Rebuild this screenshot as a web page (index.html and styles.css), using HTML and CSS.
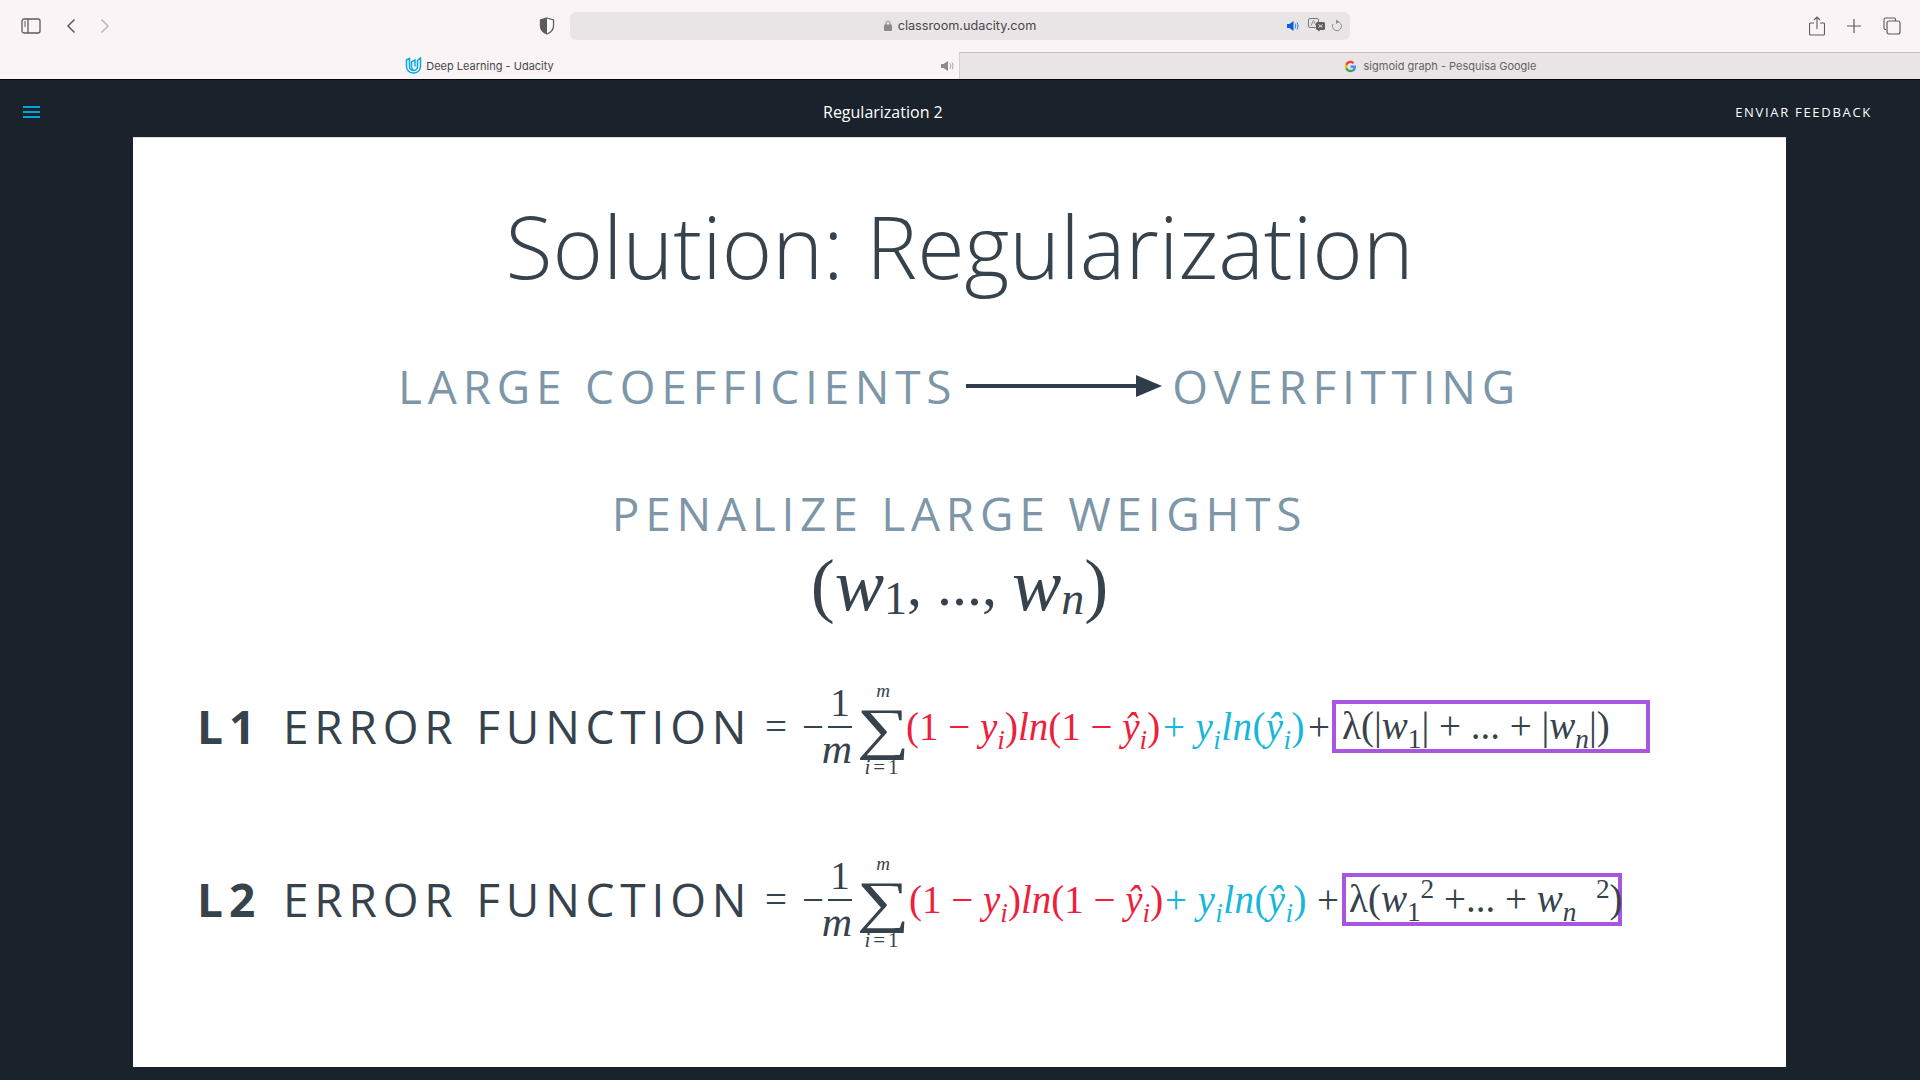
FILE: index.html
```html
<!DOCTYPE html>
<html>
<head>
    <title>Deep Learning - Udacity</title>
    <link rel="stylesheet" href="styles.css">
</head>
<body>
    <div class="toolbar">
        <div class="tool-left">
            <svg class="ico-sidebar" width="20" height="16" viewBox="0 0 20 16"><rect x="1" y="1" width="18" height="14" rx="2" fill="none" stroke="#5f5b5d" stroke-width="1.3"/><path d="M7 1v14" stroke="#5f5b5d" stroke-width="1.3"/><path d="M3 4h2M3 6h2M3 8h2" stroke="#5f5b5d" stroke-width="1"/></svg>
            <svg class="ico-back" width="10" height="16" viewBox="0 0 10 16"><path d="M8.5 1.5L2 8l6.500 6.500" fill="none" stroke="#5f5b5d" stroke-width="1.5"/></svg>
            <svg class="ico-fwd" width="10" height="16" viewBox="0 0 10 16"><path d="M1.500 1.500L8 8l-6.500 6.500" fill="none" stroke="#bdb9bb" stroke-width="1.5"/></svg>
        </div>
        <svg class="ico-shield" width="16" height="18" viewBox="0 0 16 18"><path d="M8 1l6.500 2v6c0 4-3 6.500-6.500 8-3.500-1.500-6.500-4-6.500-8V3z" fill="#fff" stroke="#5f5b5d" stroke-width="1.300"/><path d="M8 1L1.500 3v6c0 4 3 6.500 6.500 8z" fill="#5f5b5d"/></svg>
        <div class="address">
            <div class="address-text">
                <svg width="8" height="11" viewBox="0 0 8 11"><path d="M2 5V3a2 2 0 0 1 4 0v2" fill="none" stroke="#8d898b" stroke-width="1"/><rect y="4.500" width="8" height="6.500" rx="1" fill="#8d898b"/></svg>
                <span>classroom.udacity.com</span>
            </div>
            <div class="address-icons">
                <svg class="ico-speaker" width="12" height="12" viewBox="0 0 12 12"><path d="M0 4h2.500L6.500 1v10L2.500 8H0z" fill="#0a5fd8"/><path d="M8 3.500c1 1.500 1 3.500 0 5M10 2.500c1.300 2 1.300 5 0 7" fill="none" stroke="#0a5fd8" stroke-width=".8"/></svg>
                <svg width="18" height="15" viewBox="0 0 18 15"><rect x=".5" y=".5" width="10" height="9" rx="1.500" fill="none" stroke="#77767a"/><path d="M3 7.500l2.500-5 2.500 5" fill="none" stroke="#77767a" stroke-width=".8"/><rect x="8" y="4" width="9" height="8" rx="1.500" fill="#5f5b5d"/><path d="M11 13.500l1.500-2h-3z" fill="#5f5b5d"/><path d="M10.500 6.500l4 3M14.500 6.500l-4 3" stroke="#eee" stroke-width=".9"/></svg>
                <svg width="11" height="14" viewBox="0 0 11 14"><path d="M6.500 2.700A4.500 4.500 0 1 1 2 5" fill="none" stroke="#8d898b" stroke-width="1"/><path d="M5 .5l3 2.200-3 2.200z" fill="#8d898b"/></svg>
            </div>
        </div>
        <div class="tool-right">
            <svg width="16" height="20" viewBox="0 0 16 20"><path d="M5 7H1.500a1 1 0 0 0-1 1v10a1 1 0 0 0 1 1h13a1 1 0 0 0 1-1V8a1 1 0 0 0-1-1H11" fill="none" stroke="#5f5b5d" stroke-width="1.100"/><path d="M8 13V1M5 4l3-3 3 3" fill="none" stroke="#5f5b5d" stroke-width="1.100"/></svg>
            <svg width="14" height="14" viewBox="0 0 14 14"><path d="M7 0v14M0 7h14" stroke="#5f5b5d" stroke-width="1.200"/></svg>
            <svg width="18" height="18" viewBox="0 0 18 18"><path d="M3 12.500H2a1.500 1.500 0 0 1-1-1.500V2.500A1.500 1.500 0 0 1 2.500 1H11a1.500 1.500 0 0 1 1.500 1.500V4" fill="none" stroke="#5f5b5d" stroke-width="1.100"/><rect x="4" y="4" width="13" height="13" rx="2" fill="none" stroke="#5f5b5d" stroke-width="1.200"/></svg>
        </div>
    </div>

    <div class="tabs">
        <div class="tab tab-active">
            <svg width="17" height="17" viewBox="0 0 17 17"><path d="M1.500 3l3-1.500v8c0 2.500 2 4 4 4s4-1.500 4-4V3.500L15.500 1v8.500c0 4-3.200 6.500-7 6.500s-7-2.500-7-6.500z" fill="none" stroke="#02a9e0" stroke-width="1.500"/><path d="M8.500 13.500c-1.500-1-2-2.500-2-4V5l3.500-2v6.500" fill="none" stroke="#02a9e0" stroke-width="1.400"/></svg>
            <span>Deep Learning - Udacity</span>
            <svg class="tab-sound" width="13" height="12" viewBox="0 0 13 12"><path d="M0 4h2.500L7 1v10L2.500 8H0z" fill="#8d898b"/><path d="M9 3.500c1 1.500 1 3.500 0 5M11 2.500c1.300 2 1.300 5 0 7" fill="none" stroke="#8d898b" stroke-width=".8"/></svg>
        </div>
        <div class="tab tab-other">
            <svg width="13" height="13" viewBox="0 0 48 48"><path d="M44 24.500c0-1.500-.1-3-.4-4.500H24v8.500h11.200c-.5 2.700-2 5-4.300 6.500v5.500h7C42 36.500 44 31 44 24.500z" fill="#4285f4"/><path d="M24 45c5.800 0 10.700-1.900 14-5.200L31 34.300c-1.900 1.300-4.300 2-7 2-5.400 0-10-3.600-11.600-8.500H5.200v5.600C8.800 40.300 15.900 45 24 45z" fill="#34a853"/><path d="M12.400 27.800c-.9-2.600-.9-5.300 0-7.800v-5.600H5.200c-3 6-3 13 0 19z" fill="#fbbc05"/><path d="M24 11.500c3.100 0 5.800 1 8 3.100l6-6C34.500 5.300 29.600 3 24 3 15.900 3 8.800 7.700 5.200 14.400l7.200 5.600c1.600-4.900 6.200-8.500 11.600-8.500z" fill="#ea4335"/></svg>
            <span>sigmoid graph - Pesquisa Google</span>
        </div>
    </div>

    <div class="navbar">
        <div class="burger"><i></i><i></i><i></i></div>
        <div class="lesson-title">Regularization 2</div>
        <div class="feedback">ENVIAR FEEDBACK</div>
    </div>

    <div class="stage">
        <div class="slide">
            <h1 class="slide-title">Solution: Regularization</h1>

            <div class="cause">
                <span class="caps">LARGE COEFFICIENTS</span>
                <svg class="arrow" width="196" height="26" viewBox="0 0 196 26"><path d="M0 13h172" stroke="#2f3d4a" stroke-width="4"/><path d="M170 2l26 11-26 11z" fill="#2f3d4a"/></svg>
                <span class="caps">OVERFITTING</span>
            </div>

            <div class="caps penalize">PENALIZE LARGE WEIGHTS</div>

            <div class="weights math">
                <span class="paren-big">(</span><i>w</i><sub>1</sub><span class="w-comma">, ..., </span><i>w</i><sub><i>n</i></sub><span class="paren-big">)</span>
            </div>

            <div class="err-row">
                <span class="err-name">L1</span>
                <span class="err-label">ERROR FUNCTION</span>
                <div class="math formula">
                    <span class="eq">=</span>
                    <span class="minus">&minus;</span>
                    <span class="frac"><span class="frac-top">1</span><span class="frac-bottom"><i>m</i></span></span>
                    <span class="sum"><small><i>m</i></small><b>&sum;</b><small class="sum-from"><i>i</i>=1</small></span>
                    <span class="red red-one">(1 &minus; <i>y</i><sub><i>i</i></sub>)<i>ln</i>(1 &minus; <i>y&#770;</i><sub><i>i</i></sub>)</span>
                    <span class="blue blue-one">+ <i>y</i><sub><i>i</i></sub><i>ln</i>(<i>y&#770;</i><sub><i>i</i></sub>)</span>
                    <span class="plus plus-one">+</span>
                    <span class="reg reg-one">&lambda;(|<i>w</i><sub>1</sub>| + ... + |<i>w</i><sub><i>n</i></sub>|)</span>
                </div>
            </div>

            <div class="err-row err-row-two">
                <span class="err-name">L2</span>
                <span class="err-label">ERROR FUNCTION</span>
                <div class="math formula">
                    <span class="eq">=</span>
                    <span class="minus">&minus;</span>
                    <span class="frac"><span class="frac-top">1</span><span class="frac-bottom"><i>m</i></span></span>
                    <span class="sum"><small><i>m</i></small><b>&sum;</b><small class="sum-from"><i>i</i>=1</small></span>
                    <span class="red red-two">(1 &minus; <i>y</i><sub><i>i</i></sub>)<i>ln</i>(1 &minus; <i>y&#770;</i><sub><i>i</i></sub>)</span>
                    <span class="blue blue-two">+ <i>y</i><sub><i>i</i></sub><i>ln</i>(<i>y&#770;</i><sub><i>i</i></sub>)</span>
                    <span class="plus plus-two">+</span>
                    <span class="reg reg-two">&lambda;(<i>w</i><sub>1</sub><sup>2</sup> +... + <i>w</i><sub><i>n</i></sub>&nbsp;&nbsp;<sup>2</sup>)</span>
                </div>
            </div>
        </div>
    </div>
</body>
</html>
```

FILE: styles.css
```css
* {
    box-sizing: border-box;
}
html, body {
    margin: 0;
    padding: 0;
    height: 100%;
    overflow: hidden;
}
body {
    display: flex;
    flex-direction: column;
    height: 1080px;
    background-color: #1a222b;
    font-family: "Open Sans", sans-serif;
}
svg {
    display: block;
    flex: none;
}

/* browser chrome */
.toolbar {
    height: 52px;
    background-color: #faf4f6;
    display: flex;
    align-items: center;
    padding-left: 21px;
}
.tool-left {
    display: flex;
    align-items: center;
    width: 518px;
}
.ico-back {
    margin-left: 25px;
}
.ico-fwd {
    margin-left: 24px;
}
.ico-shield {
    margin-right: 15px;
}
.address {
    width: 780px;
    height: 28px;
    background-color: #e9e5e7;
    border-radius: 6px;
    position: relative;
    display: flex;
    align-items: center;
    justify-content: center;
}
.address-text {
    display: flex;
    align-items: center;
    gap: 6px;
    padding-bottom: 1px;
    font-family: Inter, "Liberation Sans", sans-serif;
    font-size: 12.700px;
    color: #4a4648;
}
.address-icons {
    position: absolute;
    right: 8px;
    top: 6px;
    display: flex;
    align-items: center;
    gap: 5px;
}
.ico-speaker {
    margin-right: 4px;
}
.tool-right {
    display: flex;
    align-items: center;
    gap: 22px;
    margin-left: 459px;
}
.tabs {
    height: 28px;
    display: flex;
    border-bottom: 1px solid #05080b;
    font-family: Inter, "Liberation Sans", sans-serif;
    font-size: 11px;
}
.tab {
    display: flex;
    align-items: center;
    justify-content: center;
    gap: 4px;
    position: relative;
}
.tab-active {
    background-color: #faf4f6;
    color: #4a4648;
    width: 959px;
}
.tab-sound {
    position: absolute;
    right: 5px;
    top: 8px;
}
.tab-other {
    background-color: #e9e5e7;
    color: #666163;
    width: 961px;
    border-top: 1px solid #c6c1c3;
    border-left: 1px solid #d5d1d3;
    gap: 7px;
}

/* udacity nav */
.navbar {
    height: 57px;
    background-color: #1a222b;
    display: flex;
    align-items: center;
    padding: 6px 48px 0 23px;
}
.burger {
    width: 17px;
    display: flex;
    flex-direction: column;
    gap: 3px;
}
.burger i {
    display: block;
    height: 2px;
    background-color: #02a3da;
}
.lesson-title {
    margin-left: 783px;
    color: #fff;
    font-size: 16px;
}
.feedback {
    margin-left: auto;
    color: #fff;
    font-size: 13px;
    font-weight: 500;
    letter-spacing: 1.700px;
}
.stage {
    flex: 1;
    padding: 0 134px 13px 133px;
    display: flex;
}
.slide {
    flex: 1;
    background-color: #fff;
    border-top: 1px solid #dcdcdc;
    display: flex;
    flex-direction: column;
    align-items: center;
    color: #36424c;
}
.slide-title {
    margin: 53px 0 0;
    font-size: 86.200px;
    line-height: 110px;
    font-weight: 300;
    color: #36424c;
}
.caps {
    font-size: 46px;
    line-height: 60px;
    color: #7d97a9;
    letter-spacing: 5.750px;
    white-space: nowrap;
}
.cause {
    margin-top: 55px;
    display: flex;
    align-items: center;
}
.arrow {
    margin: 0 10px 0 9px;
}
.penalize {
    margin-top: 67px;
}
.math {
    font-family: "Liberation Serif", serif;
    color: #36424c;
    white-space: nowrap;
}
.math sub, .math sup {
    font-size: 0.7em;
    line-height: 0;
}
.weights {
    margin-top: 2px;
    font-size: 66px;
    line-height: 80px;
    display: flex;
    align-items: center;
}
.weights i {
    font-size: 74px;
}
.weights sub {
    position: relative;
    top: 14px;
    font-size: 46px;
}
.weights sub i {
    font-size: 46px;
}
.paren-big {
    font-size: 72px;
    line-height: 80px;
}
.w-comma {
    white-space: pre;
    font-size: 60px;
}
.err-row {
    align-self: stretch;
    height: 100px;
    margin-top: 51px;
    padding-left: 64px;
    display: flex;
    align-items: center;
}
.err-row-two {
    margin-top: 73px;
}
.err-name {
    width: 86px;
    flex: none;
    font-size: 46px;
    font-weight: 700;
    letter-spacing: 6px;
}
.err-label {
    width: 482px;
    flex: none;
    font-size: 46px;
    letter-spacing: 5.800px;
    white-space: nowrap;
}
.formula {
    display: flex;
    align-items: center;
    font-size: 39px;
}
.eq {
    width: 37px;
}
.minus {
    width: 26px;
}
.frac {
    display: flex;
    flex-direction: column;
    align-items: center;
    width: 24px;
    line-height: 38px;
}
.frac-top {
    padding-bottom: 4px;
}
.frac-bottom {
    border-top: 2px solid #36424c;
    align-self: stretch;
    display: flex;
    justify-content: flex-end;
    padding-top: 2px;
    font-size: 42px;
}
.sum {
    display: flex;
    flex-direction: column;
    align-items: center;
    width: 46px;
    margin-left: 8px;
    margin-top: 6px;
}
.sum small {
    font-size: 19px;
    line-height: 18px;
}
.sum .sum-from {
    font-size: 21px;
    letter-spacing: 3px;
}
.sum b {
    font-size: 57px;
    font-weight: 400;
    line-height: 58px;
    transform: scaleX(1.3);
}
.red {
    color: #ec1f3d;
    white-space: pre;
}
.red-one {
    width: 257px;
}
.red-two {
    width: 256px;
    margin-left: 3px;
}
.blue {
    color: #17b7dc;
    white-space: pre;
    letter-spacing: .4px;
}
.blue-one {
    width: 145px;
}
.blue-two {
    width: 152px;
}
.plus-one {
    width: 24px;
}
.plus-two {
    width: 25px;
}
.reg {
    flex: none;
    border: 4px solid #a855e0;
    height: 53px;
    line-height: 44px;
    white-space: pre;
}
.reg-one {
    width: 318px;
    padding-left: 6px;
}
.reg-two {
    width: 280px;
    padding-left: 3px;
}
```
